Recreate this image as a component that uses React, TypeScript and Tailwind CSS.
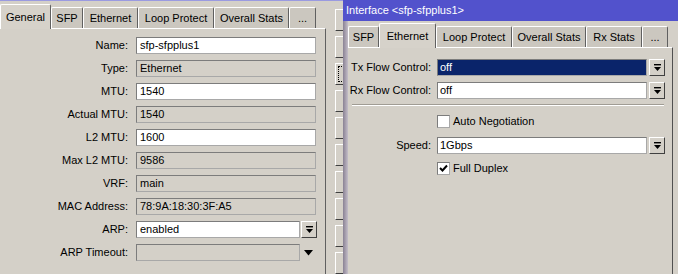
const raised = 'border border-t-white border-l-white border-r-[#404040] border-b-[#404040]';
const sunken = 'border border-t-[#7c7c7c] border-l-[#7c7c7c] border-r-[#a8a8a8] border-b-[#a8a8a8]';

function DropIcon() {
  return (
    <svg width="9" height="8" viewBox="0 0 9 8">
      <rect x="1" y="0" width="7" height="1.4" fill="#000" />
      <path d="M1 3 H8 L4.5 7 Z" fill="#000" />
    </svg>
  );
}

function DropButton() {
  return (
    <div className={`flex h-[17px] w-[16px] shrink-0 items-center justify-center bg-[#d4d0c8] ${raised}`}>
      <DropIcon />
    </div>
  );
}

function Tab({ label, active, w }: { label: string; active?: boolean; w: number }) {
  return (
    <div
      style={{ width: w }}
      className={
        active
          ? 'relative z-10 -mb-px flex h-[25px] shrink-0 items-center justify-center rounded-t-[2px] border border-b-0 border-t-white border-l-white border-r-[#606060] bg-[#d6d2ca]'
          : 'flex h-[21px] shrink-0 items-center justify-center rounded-t-[2px] border border-b-0 border-t-white border-l-white border-r-[#606060] bg-[#cbc7bf]'
      }
    >
      {label}
    </div>
  );
}

function Field({
  label,
  value,
  disabled,
  select,
  arrow,
}: {
  label: string;
  value: string;
  disabled?: boolean;
  select?: boolean;
  arrow?: boolean;
}) {
  return (
    <div className="flex h-[17px] items-center">
      <div className="w-[130px] shrink-0 pr-[2px] text-right">{label}</div>
      <div
        className={`ml-[6px] flex h-[17px] items-center pl-[3px] ${sunken} ${
          disabled ? 'bg-[#d4d0c8]' : 'bg-white'
        } ${select || arrow ? 'w-[164px]' : 'w-[180px]'}`}
      >
        {value}
      </div>
      {select && (
        <div className="ml-px">
          <DropButton />
        </div>
      )}
      {arrow && (
        <div className="flex w-[17px] justify-center">
          <svg width="9" height="6" viewBox="0 0 9 6">
            <path d="M0 0 H9 L4.5 5.5 Z" fill="#000" />
          </svg>
        </div>
      )}
    </div>
  );
}

function Row({ label, value, selected }: { label: string; value: string; selected?: boolean }) {
  return (
    <div className="flex h-[17px] items-center">
      <div className="w-[83px] shrink-0 text-right">{label}</div>
      <div
        className={`ml-[6px] flex h-[17px] w-[210px] items-center pl-[2px] ${sunken} ${
          selected ? 'bg-[#0a246a] text-white' : 'bg-white'
        }`}
      >
        {value}
      </div>
      <div className="ml-[2px]">
        <DropButton />
      </div>
    </div>
  );
}

function Check({ label, checked }: { label: string; checked?: boolean }) {
  return (
    <div className="ml-[89px] flex h-[13px] items-center">
      <div className={`flex h-[13px] w-[13px] items-center justify-center bg-white ${sunken}`}>
        {checked && (
          <svg width="9" height="9" viewBox="0 0 9 9">
            <path d="M1 4 L3.5 6.5 L8 1.5" stroke="#000" strokeWidth="2" fill="none" />
          </svg>
        )}
      </div>
      <span className="ml-[3px]">{label}</span>
    </div>
  );
}

function LeftWindow() {
  const fields = [
    { label: 'Name:', value: 'sfp-sfpplus1' },
    { label: 'Type:', value: 'Ethernet', disabled: true },
    { label: 'MTU:', value: '1540' },
    { label: 'Actual MTU:', value: '1540', disabled: true },
    { label: 'L2 MTU:', value: '1600' },
    { label: 'Max L2 MTU:', value: '9586', disabled: true },
    { label: 'VRF:', value: 'main', disabled: true },
    { label: 'MAC Address:', value: '78:9A:18:30:3F:A5', disabled: true },
    { label: 'ARP:', value: 'enabled', select: true },
    { label: 'ARP Timeout:', value: '', disabled: true, arrow: true },
  ];
  return (
    <div className="absolute left-0 top-0 flex h-full w-[400px] flex-col bg-[#d4d0c8]">
      <div className="h-[5px] border-b border-[#9a9ae0] bg-[#5656cc]" />
      <div className="flex flex-1">
        <div className="flex w-[326px] flex-col pt-[3px]">
          <div className="flex items-end">
            <Tab label="General" active w={51} />
            <Tab label="SFP" w={32} />
            <Tab label="Ethernet" w={55} />
            <Tab label="Loop Protect" w={76} />
            <Tab label="Overall Stats" w={75} />
            <Tab label="..." w={27} />
          </div>
          <div className="flex flex-1 flex-col gap-[6px] border-t border-r border-t-white border-r-[#606060] pt-[8px]">
            {fields.map((f) => (
              <Field key={f.label} {...f} />
            ))}
          </div>
        </div>
        <div className="ml-[9px] flex flex-col gap-[5px] pt-[8px]">
          {Array.from({ length: 10 }).map((_, i) => (
            <div key={i} className={`h-[22px] w-[60px] bg-[#d4d0c8] ${raised} p-[2px]`}>
              {i === 2 && <div className="h-full w-full border border-dotted border-black" />}
            </div>
          ))}
        </div>
      </div>
    </div>
  );
}

function RightWindow() {
  return (
    <div className="absolute left-[343px] top-0 z-20 flex h-full w-[340px] flex-col bg-[#d4d0c8]">
      <div className="flex h-[21px] items-center bg-[#5252cc] pl-[3px] text-white">Interface &lt;sfp-sfpplus1&gt;</div>
      <div className="flex flex-1">
        <div className="w-[5px] bg-gradient-to-r from-[#8a8294] to-[#c4bec8]" />
        <div className="flex w-[325px] flex-col pt-[2px]">
          <div className="flex items-end">
            <Tab label="SFP" w={31} />
            <Tab label="Ethernet" active w={57} />
            <Tab label="Loop Protect" w={76} />
            <Tab label="Overall Stats" w={74} />
            <Tab label="Rx Stats" w={56} />
            <Tab label="..." w={26} />
          </div>
          <div className="flex flex-1 flex-col border-t border-r border-t-white border-r-[#505050] pt-[11px]">
            <Row label="Tx Flow Control:" value="off" selected />
            <div className="mt-[6px]">
              <Row label="Rx Flow Control:" value="off" />
            </div>
            <div className="ml-[4px] mr-[8px] mt-[5px] border-t border-b border-t-[#a09c94] border-b-white" />
            <div className="mt-[9px]">
              <Check label="Auto Negotiation" />
            </div>
            <div className="mt-[9px]">
              <Row label="Speed:" value="1Gbps" />
            </div>
            <div className="mt-[8px]">
              <Check label="Full Duplex" checked />
            </div>
          </div>
        </div>
      </div>
    </div>
  );
}

export default function App() {
  return (
    <div className="relative h-[274px] w-[678px] overflow-hidden bg-[#d4d0c8] font-['Liberation_Sans',Arial,sans-serif] text-[11px] leading-none text-black">
      <LeftWindow />
      <RightWindow />
    </div>
  );
}
